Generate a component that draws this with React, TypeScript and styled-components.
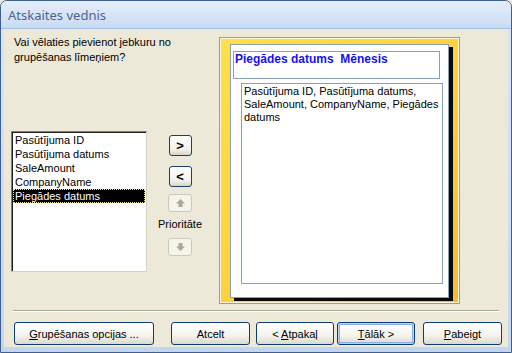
import styled, { createGlobalStyle } from 'styled-components';

const GlobalStyle = createGlobalStyle`
  html, body {
    margin: 0;
    padding: 0;
    background: #ece9d8;
  }
  * {
    box-sizing: border-box;
  }
`

const Window = styled.div`
  width: 512px;
  height: 353px;
  display: flex;
  flex-direction: column;
  border: 1px solid #3f5f8f;
  border-radius: 7px 7px 0 0;
  background: linear-gradient(#d9e6f8, #c3d6f0);
  padding: 0 3px 5px 3px;
  font-family: "Liberation Sans", Arial, sans-serif;
  font-size: 11px;
  color: #000;
  overflow: hidden;
`

const TitleBar = styled.div`
  height: 28px;
  margin: 0 -3px;
  padding-left: 7px;
  display: flex;
  align-items: center;
  background: linear-gradient(#e6eefb, #c9dbf3);
  border-bottom: 1px solid #a3bfe4;
  font-family: "Noto Sans", "Liberation Sans", sans-serif;
  font-size: 13px;
  color: #4b6590;
`

const Client = styled.div`
  flex: 1;
  background: #ece9d8;
  display: flex;
  flex-direction: column;
  padding-top: 8px;
`

const TopRow = styled.div`
  display: flex;
  padding-left: 7px;
  height: 267px;
`

const LeftColumn = styled.div`
  width: 208px;
  display: flex;
  flex-direction: column;
`

const Question = styled.div`
  margin: -2px 0 0 3px;
  height: 30px;
  line-height: 15px;
`

const ListRow = styled.div`
  margin-top: 66px;
  display: flex;
`

const ListBox = styled.div`
  width: 136px;
  height: 141px;
  background: #fff;
  border: 1px solid #7f7f7f;
  border-right-color: #d4d0c8;
  border-bottom-color: #d4d0c8;
  box-shadow: inset 1px 1px 0 #202020;
  padding: 1px 1px 0 1px;
`

const ListItem = styled.div<{ $selected?: boolean }>`
  height: 14px;
  line-height: 14px;
  padding-left: 2px;
  white-space: nowrap;
  background: ${p => (p.$selected ? '#000' : 'transparent')};
  color: ${p => (p.$selected ? '#fff' : '#000')};
  outline: ${p => (p.$selected ? '1px dotted #e8e0a0' : 'none')};
  outline-offset: -1px;
`

const MoveColumn = styled.div`
  width: 48px;
  margin-left: 9px;
  padding-top: 4px;
  display: flex;
  flex-direction: column;
  align-items: center;
`

const SmallButton = styled.button<{ $mt: number }>`
  width: 23px;
  height: 21px;
  margin-top: ${p => p.$mt}px;
  padding: 0;
  border: 1px solid #1c3f6e;
  border-radius: 3px;
  background: linear-gradient(#ffffff, #f3f2ec 70%, #d8d4c8);
  font-family: "Liberation Sans", Arial, sans-serif;
  font-size: 13px;
  font-weight: bold;
  color: #000;
  line-height: 18px;
`

const DisabledButton = styled.div<{ $mt: number }>`
  width: 24px;
  height: 18px;
  margin-top: ${p => p.$mt}px;
  border: 1px solid #cac8bb;
  border-radius: 3px;
  background: #f5f4ea;
  display: flex;
  align-items: center;
  justify-content: center;
`

const PriorityLabel = styled.div`
  margin-top: 5px;
  height: 14px;
  line-height: 14px;
  white-space: nowrap;
`

const PreviewFrame = styled.div`
  width: 241px;
  height: 267px;
  border: 1px solid #f08a12;
  box-shadow: inset 0 0 0 1px #fff7d6;
  background: linear-gradient(135deg, #ffe04a 0%, #fdd23f 50%, #fbb936 100%);
  padding: 6px 0 0 10px;
`

const Page = styled.div`
  width: 219px;
  height: 254px;
  background: #fff;
  border: 1px solid #8a9fb8;
  box-shadow: 4px 3px 0 #0a0a0a;
  display: flex;
  flex-direction: column;
`

const Box = styled.div<{ $ml: number; $mt: number; $w: number; $h: number }>`
  margin: ${p => p.$mt}px 0 0 ${p => p.$ml}px;
  width: ${p => p.$w}px;
  height: ${p => p.$h}px;
  border: 1px solid #8a9fb8;
`

const GroupTitle = styled.div`
  padding-left: 1px;
  line-height: 14px;
  font-weight: bold;
  font-size: 12px;
  color: #1414ee;
  white-space: pre;
`

const FieldText = styled.div`
  padding: 1px 0 0 2px;
  line-height: 13px;
`

const Separator = styled.div`
  margin: 6px 9px 0 9px;
  height: 2px;
  border-top: 1px solid #aca899;
  border-bottom: 1px solid #fff;
`

const ButtonRow = styled.div`
  display: flex;
  margin-top: 10px;
  padding-left: 10px;
`

const Button = styled.button<{ $w: number; $ml?: number; $default?: boolean }>`
  width: ${p => p.$w}px;
  height: 23px;
  margin-left: ${p => p.$ml ?? 0}px;
  padding: 0;
  border: 1px solid #0b3d72;
  border-radius: 3px;
  background: linear-gradient(#ffffff, #f4f3ee 60%, #dcd8cc);
  box-shadow: ${p => (p.$default ? 'inset 0 0 0 1px #b9d1f6, inset 0 0 0 2px #8aaef0' : 'none')};
  font-family: "Liberation Sans", Arial, sans-serif;
  font-size: 11px;
  color: #000;
  white-space: nowrap;
`

const fields = ['Pasūtījuma ID', 'Pasūtījuma datums', 'SaleAmount', 'CompanyName', 'Piegādes datums'];

const Arrow = ({ down }: { down?: boolean }) => (
  <svg width="9" height="8" viewBox="0 0 9 8" style={{ transform: down ? 'rotate(180deg)' : undefined }}>
    <path d="M4.5 0 L9 4.5 L6.5 4.5 L6.5 8 L2.5 8 L2.5 4.5 L0 4.5 Z" fill="#aca899" />
  </svg>
);

export default function App() {
  return (
    <Window>
      <GlobalStyle />
      <TitleBar>Atskaites vednis</TitleBar>
      <Client>
        <TopRow>
          <LeftColumn>
            <Question>
              Vai vēlaties pievienot jebkuru no
              <br />
              grupēšanas līmeņiem?
            </Question>
            <ListRow>
              <ListBox>
                {fields.map((f, i) => (
                  <ListItem key={f} $selected={i === fields.length - 1}>
                    {f}
                  </ListItem>
                ))}
              </ListBox>
              <MoveColumn>
                <SmallButton $mt={0}>&gt;</SmallButton>
                <SmallButton $mt={10}>&lt;</SmallButton>
                <DisabledButton $mt={7}>
                  <Arrow />
                </DisabledButton>
                <PriorityLabel>Prioritāte</PriorityLabel>
                <DisabledButton $mt={7}>
                  <Arrow down />
                </DisabledButton>
              </MoveColumn>
            </ListRow>
          </LeftColumn>
          <PreviewFrame>
            <Page>
              <Box $ml={2} $mt={6} $w={207} $h={28}>
                <GroupTitle>Piegādes datums  Mēnesis</GroupTitle>
              </Box>
              <Box $ml={10} $mt={4} $w={202} $h={201}>
                <FieldText>
                  Pasūtījuma ID, Pasūtījuma datums,
                  <br />
                  SaleAmount, CompanyName, Piegādes
                  <br />
                  datums
                </FieldText>
              </Box>
            </Page>
          </PreviewFrame>
        </TopRow>
        <Separator />
        <ButtonRow>
          <Button $w={140}>
            <u>G</u>rupēšanas opcijas ...
          </Button>
          <Button $w={79} $ml={17}>Atcelt</Button>
          <Button $w={78} $ml={6}>
            &lt; <u>A</u>tpakaļ
          </Button>
          <Button $w={78} $ml={3} $default>
            <u>T</u>ālāk &gt;
          </Button>
          <Button $w={79} $ml={8}>
            <u>P</u>abeigt
          </Button>
        </ButtonRow>
      </Client>
    </Window>
  );
}
